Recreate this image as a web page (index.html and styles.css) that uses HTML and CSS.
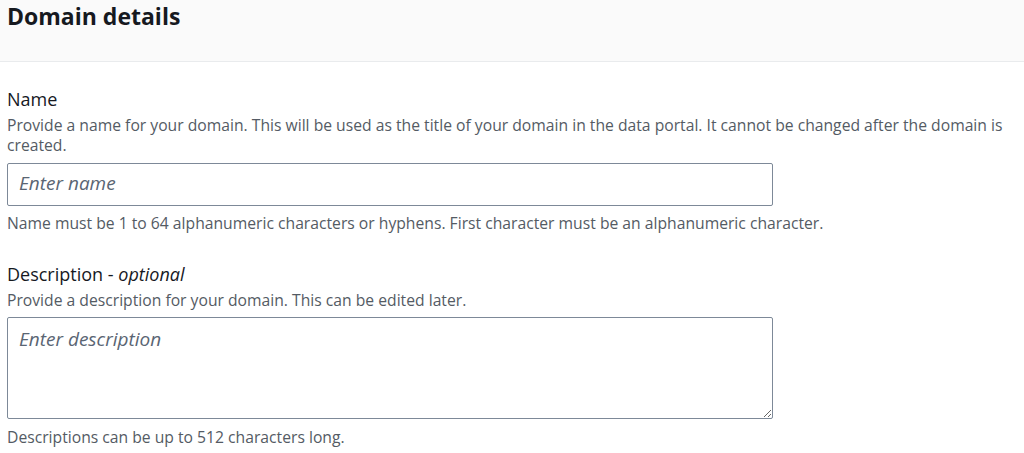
FILE: index.html
```html
<!DOCTYPE html>
<html>
<head>
<meta charset="utf-8">
<link rel="stylesheet" href="styles.css">
</head>
<body>
<div class="panel">
  <div class="panel-header">
    <h2 class="title">Domain details</h2>
  </div>
  <div class="panel-body">
    <div class="field">
      <div class="label">Name</div>
      <div class="desc">Provide a name for your domain. This will be used as the title of your domain in the data portal. It cannot be changed after the domain is created.</div>
      <input class="input" type="text" placeholder="Enter name">
      <div class="hint">Name must be 1 to 64 alphanumeric characters or hyphens. First character must be an alphanumeric character.</div>
    </div>
    <div class="field">
      <div class="label">Description - <i>optional</i></div>
      <div class="desc">Provide a description for your domain. This can be edited later.</div>
      <textarea class="textarea" placeholder="Enter description"></textarea>
      <div class="hint">Descriptions can be up to 512 characters long.</div>
    </div>
  </div>
</div>
</body>
</html>
```

FILE: styles.css
```css
* { box-sizing: border-box; }
body {
  margin: 0;
  background: #ffffff;
  font-family: "Open Sans", "Noto Sans", sans-serif;
  color: #16191f;
}
.panel-header {
  background: #fafafa;
  border-bottom: 1px solid #e9ebed;
  height: 62px;
  padding: 2px 7px 0;
}
.title {
  margin: 0;
  font-size: 23px;
  font-weight: 700;
  line-height: 28px;
  color: #16191f;
}
.panel-body {
  padding: 27px 7px 0;
  display: flex;
  flex-direction: column;
  gap: 31px;
}
.field {
  display: flex;
  flex-direction: column;
}
.label {
  font-size: 18px;
  line-height: 21.5px;
  color: #16191f;
}
.desc, .hint {
  font-size: 15.7px;
  line-height: 20.5px;
  color: #545b64;
}
.desc {
  margin-top: 4px;
  margin-bottom: 7px;
}
.input, .textarea {
  display: block;
  width: 766px;
  border: 1px solid #7d8998;
  border-radius: 2px;
  font-family: inherit;
  font-size: 19px;
  line-height: 24px;
  color: #16191f;
  background: #fff;
  padding: 0 11px;
}
.input {
  height: 43px;
  padding-top: 7px;
  padding-bottom: 10px;
  margin-bottom: 7px;
}
.textarea {
  height: 102px;
  padding-top: 9px;
  resize: vertical;
  margin-bottom: 8px;
}
.input::placeholder, .textarea::placeholder {
  color: #5a6573;
  font-style: italic;
}
```
